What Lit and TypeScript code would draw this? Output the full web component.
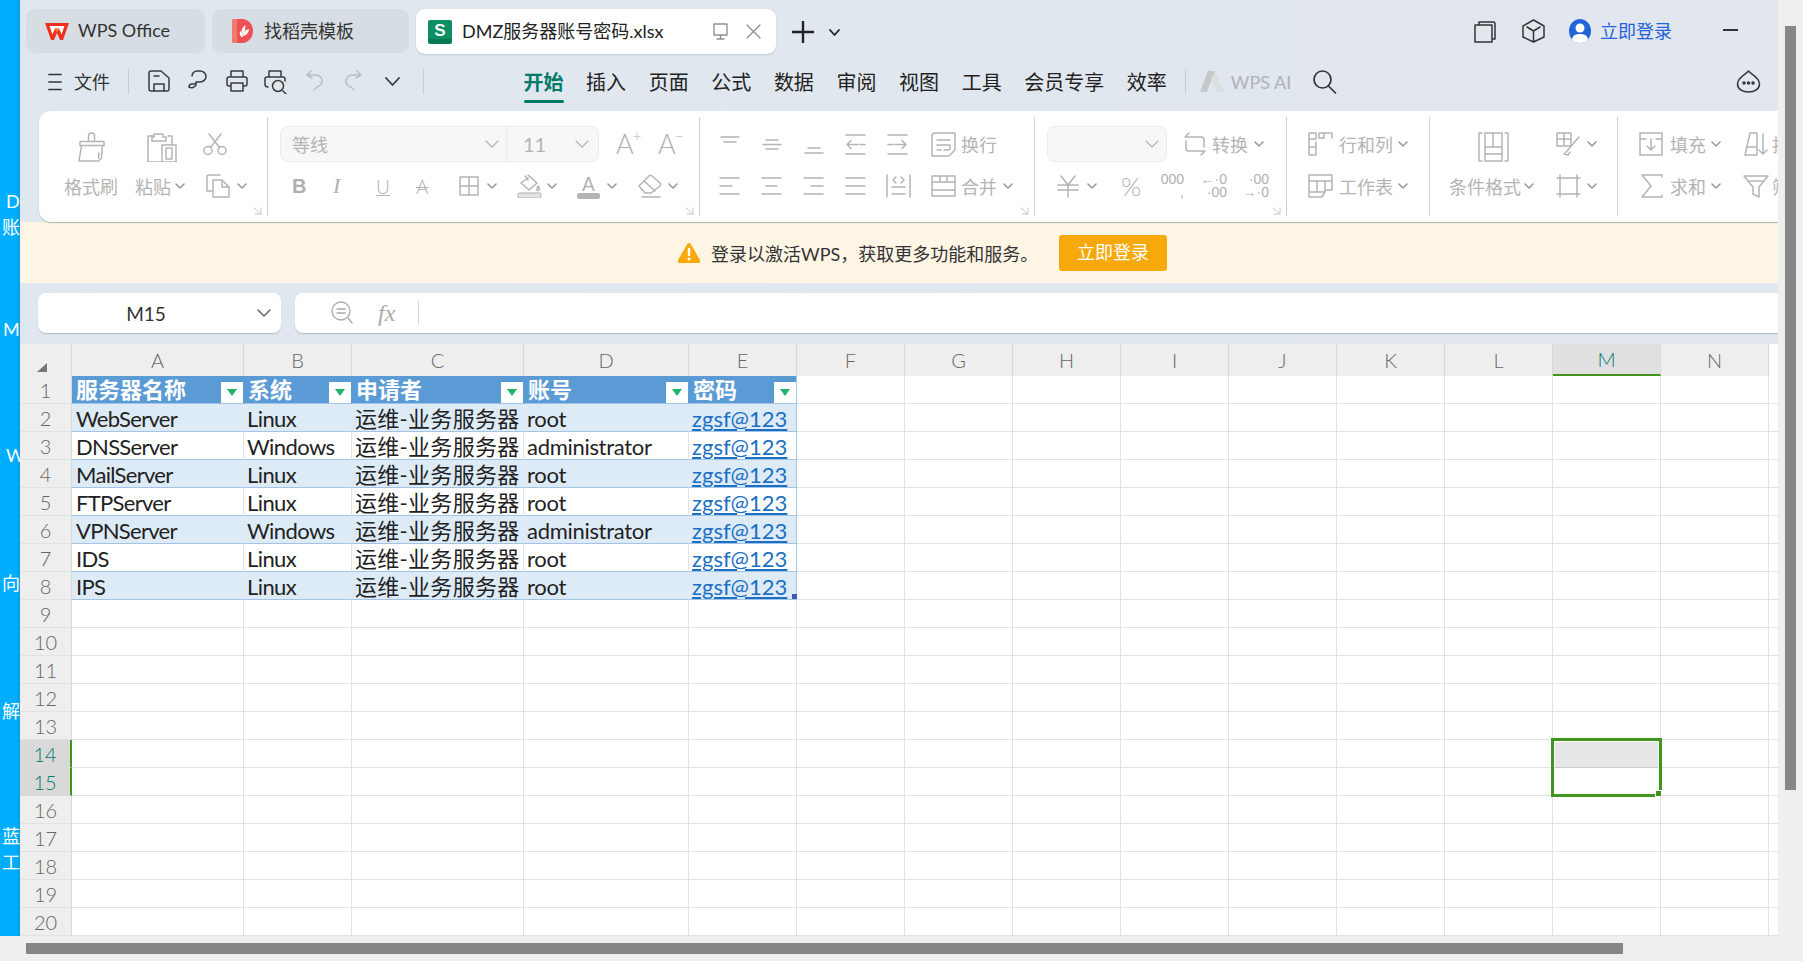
import { LitElement, html, css, svg } from 'lit';
import { customElement } from 'lit/decorators.js';

// icon helper: stroke icons take the colour of their parent
const ic = (w: number, h: number, body: unknown, sw = 1.5) => html`<svg
  width=${w} height=${h} viewBox="0 0 ${w} ${h}" fill="none" stroke="currentColor"
  stroke-width=${sw} stroke-linecap="round" stroke-linejoin="round">${body}</svg>`;

const p = (d: string) => svg`<path d=${d} />`;

const chevron = (w = 12, h = 7, sw = 1.6) => ic(w, h, p(`M1 1L${w / 2} ${h - 1}L${w - 1} 1`), sw);

const brush = ic(30, 30, p('M11.5 9V4a3 3 0 0 1 6 0v5M3 9.5h24v4H3zM4.5 13.5L2 29h19.5l3-3 1-12.5M22 21l-.5 5'));
const clipboard = ic(31, 30, p('M8 4H2v26h18M22 4h4v8M8 5V2h9v3h3v4H6V5zM16 13h14v17H16zM20 16h6v11h-6z'));
const scissors = ic(24, 23, svg`<circle cx="5" cy="17.5" r="4"/><circle cx="19" cy="17.5" r="4"/>${p('M7.5 14.5L18 1M16.5 14.5L6 1')}`);
const copy = ic(24, 24, p('M14 1H3a2 2 0 0 0-2 2v14h5M7 6h9l7 7v10H7zM16 6v7h7'));
const borders = ic(20, 20, p('M1 1h18v18H1zM1 10h18M10 1v18'));
const fillIcon = ic(25, 24, svg`${p('M11 1l9 8-8 7-8-7 7-5M8 2l3 4M21 12c1.5 2 2 3 1 4s-2.5 0-2-1 .5-2 1-3')}<rect x="1" y="19" width="23" height="5" rx="2" fill="#e3e3e3" stroke="#c8c8c8" />`);
const eraser = ic(26, 24, p('M2 12L12 2a2 2 0 0 1 3 0l8 7a2 2 0 0 1 0 3L14 19H8zM7 7l11 10M5 23h18'));
const alTop = ic(20, 24, p('M1 5h18M4 10h12'));
const alMid = ic(20, 24, p('M4 8h12M1 12.5h18M4 17h12'));
const alBot = ic(20, 24, p('M4 16h12M1 21h18'));
const outdent = ic(21, 24, p('M1 3h19M1 22h19M13 12.5H2M6 8.5l-4 4 4 4M15 12.5h5'));
const indent = ic(21, 24, p('M1 3h19M1 22h19M8 12.5h11M15 8.5l4 4-4 4M1 12.5h5'));
const wrap = ic(25, 25, p('M4 1h20v17l-6 6H1V4a3 3 0 0 1 3-3zM6 8h13M6 13h13v3a2 2 0 0 1-2 2h-4M6 18h4'));
const lLeft = ic(21, 24, p('M1 4h19M1 12h12M1 20h19'));
const lCenter = ic(21, 24, p('M1 4h19M5 12h11M1 20h19'));
const lRight = ic(21, 24, p('M1 4h19M8 12h12M1 20h19'));
const lJustify = ic(21, 24, p('M1 4h19M1 12h19M1 20h19'));
const distribute = ic(25, 24, p('M1 1v22M24 1v22M6 20h13M6 13h13M10 3L7 6l3 3M15 3l3 3-3 3'));
const merge = ic(25, 24, p('M1 2h23v20H1zM1 8h23M1 16h23M9 2v6M16 2v6'));
const convert = ic(24, 24, p('M6 1L2 5h16a3 3 0 0 1 3 3v7M3 9v7a3 3 0 0 0 3 3h16M18 23l4-4'));
const yuan = ic(22, 24, p('M4 2l7 9 7-9M1 11h20M1 16h20M11 11v12'));
const rowCol = ic(25, 24, p('M1 1h7v6H1zM11 1h13v5M11 1v5h5M16 1v5M1 7v16h7V10M1 15h7'));
const sheetIcon = ic(25, 24, p('M1 1h23v15M1 1v22h13l3-5M1 7h23M9 7v11M17 7v11M1 18h16M17 16h7'));
const condFormat = ic(31, 30, p('M4 1H1v28h3M27 1h3v28h-3M7 1h17v28H7zM7 15h17M15 1v14M7 22h17'));
const tableBrush = ic(25, 24, p('M1 1h14v13H1zM1 7h14M8 1v13M23 5L11 19M11 19l-3 3 4 1 2-3'));
const borderOuter = ic(25, 24, p('M4 1v22M21 1v22M1 4h23M1 20h23'));
const fillDown = ic(24, 24, p('M1 1h22v22H1zM1 7h6M17 7h6M12 7v11M8 14l4 4 4-4'));
const sumIcon = ic(24, 24, p('M22 3V1H2l9 11-9 11h20v-2'));
const sortIcon = ic(26, 24, p('M2 23L7 1h7v22zM4 15h10M20 2v20M16 18l4 4 4-4'));
const filterIcon = ic(26, 24, p('M1 2h24l-9 11v10l-6-3v-7zM7 7h12'));

type Cell = { x: number; c: unknown; end?: boolean };
const I = (x: number, c: unknown, end = false): Cell => ({ x, c, end });
const T = (x: number, t: string): Cell => ({ x, c: html`<span class="lbl">${t}</span>` });
const C = (x: number): Cell => ({ x, c: html`<span class="caret">${chevron(10, 6)}</span>` });

type Group = { left: number; right: number; launcher?: boolean; rows: Cell[][] };

const fontSelect = html`<div class="fselect">
  <div class="fname"><span>等线</span>${chevron(14, 8, 1.2)}</div>
  <div class="fsize"><span>11</span>${chevron(14, 8, 1.2)}</div>
</div>`;
const numSelect = html`<div class="nselect">${chevron(14, 8, 1.2)}</div>`;
const stack = (a: string, b: string) => html`<div class="stack"><span>${a}</span><span>${b}</span></div>`;

const groups: Group[] = [
  {
    left: 39, right: 268, launcher: true,
    rows: [
      [I(77, brush, true), I(146, clipboard, true), I(203, scissors)],
      [T(64, '格式刷'), T(135, '粘贴'), C(175), I(206, copy), C(237)],
    ],
  },
  {
    left: 268, right: 700, launcher: true,
    rows: [
      [I(280, fontSelect), I(616, html`<span class="big">A<sup>+</sup></span>`), I(658, html`<span class="big">A<sup>−</sup></span>`)],
      [
        I(292, html`<b class="g-b">B</b>`), I(333, html`<i class="g-i">I</i>`), I(376, html`<u class="g-u">U</u>`), I(416, html`<s class="g-u">A</s>`),
        I(459, borders), C(487), I(517, fillIcon), C(547),
        I(577, html`<div class="fcolor"><span>A</span><div></div></div>`), C(607), I(637, eraser), C(668),
      ],
    ],
  },
  {
    left: 700, right: 1035, launcher: true,
    rows: [
      [I(720, alTop), I(762, alMid), I(804, alBot), I(845, outdent), I(887, indent), I(931, wrap), T(961, '换行')],
      [I(719, lLeft), I(761, lCenter), I(803, lRight), I(845, lJustify), I(886, distribute), I(931, merge), T(961, '合并'), C(1003)],
    ],
  },
  {
    left: 1035, right: 1287, launcher: true,
    rows: [
      [I(1047, numSelect), I(1183, convert), T(1212, '转换'), C(1254)],
      [
        I(1057, yuan), C(1087), I(1121, html`<span class="pct">%</span>`),
        I(1162, stack('000', ',')), I(1205, stack('←·0', '·00')), I(1247, stack('·00', '→·0')),
      ],
    ],
  },
  {
    left: 1287, right: 1430,
    rows: [
      [I(1308, rowCol), T(1339, '行和列'), C(1398)],
      [I(1308, sheetIcon), T(1339, '工作表'), C(1398)],
    ],
  },
  {
    left: 1430, right: 1618,
    rows: [
      [I(1478, condFormat, true), I(1556, tableBrush), C(1587)],
      [T(1449, '条件格式'), C(1524), I(1556, borderOuter), C(1587)],
    ],
  },
  {
    left: 1618, right: 1790,
    rows: [
      [I(1639, fillDown), T(1670, '填充'), C(1711), I(1743, sortIcon), T(1772, '排序')],
      [I(1640, sumIcon), T(1670, '求和'), C(1711), I(1743, filterIcon), T(1772, '筛选')],
    ],
  },
];

const sideLabels = [
  { t: 'D', y: 189, x: 6 }, { t: '账', y: 215, x: 2 }, { t: 'M', y: 317, x: 3 }, { t: 'W', y: 443, x: 6 },
  { t: '向', y: 571, x: 2 }, { t: '解', y: 699, x: 2 }, { t: '蓝', y: 824, x: 2 }, { t: '工', y: 850, x: 2 },
];

const menuTabs = ['开始', '插入', '页面', '公式', '数据', '审阅', '视图', '工具', '会员专享', '效率'];
const colNames = ['A', 'B', 'C', 'D', 'E', 'F', 'G', 'H', 'I', 'J', 'K', 'L', 'M', 'N', ''];
const heads = ['服务器名称', '系统', '申请者', '账号', '密码'];
const owner = '运维-业务服务器';
const latinClass = ['ln', 'lw', 'cj', 'lr', ''];
const servers = [
  ['WebServer', 'Linux', 'root'],
  ['DNSServer', 'Windows', 'administrator'],
  ['MailServer', 'Linux', 'root'],
  ['FTPServer', 'Linux', 'root'],
  ['VPNServer', 'Windows', 'administrator'],
  ['IDS', 'Linux', 'root'],
  ['IPS', 'Linux', 'root'],
];

@customElement('app-root')
export class AppRoot extends LitElement {
  static styles = css`
    :host {
      display: block;
      width: 1803px;
      height: 961px;
      overflow: hidden;
      background: #efefef;
      font-family: Lato, 'Noto Sans CJK SC', sans-serif;
      color: #333;
    }
    svg { display: block; flex-shrink: 0; }
    .top { display: flex; height: 936px; }
    .side {
      width: 20px;
      flex-shrink: 0;
      overflow: hidden;
      background: linear-gradient(90deg, #00aeff 0 75%, #0a9fe2 100%);
      color: #fff;
      font-size: 18px;
      line-height: 24px;
      white-space: nowrap;
    }
    .side div { height: 0; overflow: visible; }
    .win { width: 1758px; flex-shrink: 0; display: flex; flex-direction: column; overflow: hidden; background: linear-gradient(90deg, #dfe8ee, #e2e6ee); }
    .vscroll { flex: 1; padding: 26px 7px 0; }
    .vscroll div { height: 764px; background: #868686; }
    .hscroll { height: 25px; padding: 7px 0 0 26px; }
    .hscroll div { width: 1597px; height: 11px; background: #868686; }

    .tabbar { height: 54px; display: flex; align-items: flex-start; padding: 9px 40px 0 6px; box-sizing: border-box; flex-shrink: 0; }
    .tab { height: 44px; display: flex; align-items: center; box-sizing: border-box; border-radius: 9px; background: #d6dee3; font-size: 18px; margin-right: 7px; flex-shrink: 0; }
    .tab span { padding-bottom: 2px; }
    .tab.t1 { width: 179px; padding-left: 19px; gap: 9px; }
    .tab.t2 { width: 197px; padding-left: 20px; gap: 10px; }
    .tab.t3 { width: 360px; height: 45px; padding-left: 12px; gap: 10px; background: #fff; box-shadow: 0 1px 2px #c4ccd2; color: #222; }
    .tab.t3 .name { width: 240px; padding-bottom: 4px; }
    .sicon { width: 24px; height: 24px; border-radius: 2px; background: linear-gradient(#0b8f63 0 78%, #0a7a52 78% 100%); color: #fff; font: bold 17px/22px 'Liberation Sans', sans-serif; text-align: center; }
    .tclose { color: #8a8f94; display: flex; gap: 17px; align-items: center; }
    .plus { margin: 12px 0 0 9px; color: #222; display: flex; align-items: center; gap: 15px; }
    .tright { margin-left: auto; display: flex; align-items: center; height: 44px; color: #333; }
    .tright .login { color: #2264d8; font-size: 18px; margin-left: 9px; width: 72px; white-space: nowrap; padding-bottom: 2px; }
    .tright .min { width: 15px; height: 2px; background: #333; margin: 0 0 3px 51px; }

    .menubar { height: 57px; display: flex; align-items: center; flex-shrink: 0; padding-bottom: 2px; box-sizing: border-box; }
    .ham { margin-left: 28px; color: #333; }
    .filet { font-size: 18px; margin-left: 12px; width: 36px; padding-bottom: 2px; }
    .vline { width: 1px; height: 25px; background: #c6ccd2; flex-shrink: 0; }
    .qa { display: flex; margin-left: 10px; width: 276.5px; }
    .qa div { width: 39px; display: flex; justify-content: center; color: #3a3a3a; }
    .qa .off { color: #b9bdc1; }
    .mtabs { display: flex; gap: 22.6px; margin-left: 100px; font-size: 20px; line-height: 30px; }
    .mtabs div { position: relative; color: #222; white-space: nowrap; }
    .mtabs .on { color: #047a6a; font-weight: 700; }
    .mtabs .on::after { content: ''; position: absolute; left: 0; right: 0; top: 33px; height: 3px; border-radius: 2px; background: #047a6a; }
    .ai { color: #aeb3b7; font-size: 18px; margin: 0 21px 0 7px; width: 61px; white-space: nowrap; }
    .logo-ai { margin-left: 14px; }
    .mright { margin-left: auto; margin-right: 17px; color: #333; }

    .ribbon { height: 111px; margin-left: 19px; display: flex; flex-shrink: 0; overflow: hidden; background: #fff; border-radius: 12px 0 0 12px; box-shadow: 0 1px 1px #aeb4ba; position: relative; color: #b4b4b4; }
    .group { flex-shrink: 0; box-sizing: border-box; margin-top: 6px; height: 99px; padding-top: 9px; border-right: 1px solid #d2d2d2; }
    .group.last { border-right: 0; }
    .row { display: flex; align-items: center; height: 36px; }
    .row + .row { margin-top: 6px; }
    .cell { flex-shrink: 0; display: flex; align-items: center; height: 36px; white-space: nowrap; }
    .cell.end { align-items: flex-end; }
    .lbl { font-size: 18px; color: #b4b4b4; }
    .caret { color: #9a9a9a; display: flex; }
    .launch { display: flex; justify-content: flex-end; padding: 3px 5px 0 0; color: #c4c4c4; }
    .fselect { display: flex; width: 319px; height: 36px; box-sizing: border-box; background: #f7f7f7; border: 1px solid #ececec; border-radius: 7px; color: #b4b4b4; font-size: 18px; }
    .fname { width: 226px; padding: 0 7px 0 11px; box-sizing: border-box; display: flex; align-items: center; justify-content: space-between; border-right: 1px solid #ececec; }
    .fsize { flex: 1; padding: 0 9px 0 16px; display: flex; align-items: center; justify-content: space-between; font-size: 20px; }
    .nselect { width: 120px; height: 36px; box-sizing: border-box; display: flex; align-items: center; justify-content: flex-end; padding-right: 7px; background: #f7f7f7; border: 1px solid #ececec; border-radius: 7px; }
    .big { font-size: 27px; line-height: 24px; font-weight: 300; color: #b0b0b0; }
    .big sup { font-size: 15px; line-height: 0; vertical-align: 12px; margin-left: -1px; }
    .g-b { font: bold 20px 'Liberation Sans', sans-serif; color: #b0b0b0; }
    .g-i { font: italic 22px 'Liberation Serif', serif; color: #b0b0b0; }
    .g-u { font: 300 19px Lato, sans-serif; color: #b0b0b0; }
    .fcolor { width: 23px; text-align: center; font-size: 19px; line-height: 19px; color: #b0b0b0; }
    .fcolor div { height: 6px; border-radius: 2px; background: #b4b4b4; }
    .pct { font-size: 26px; font-weight: 300; color: #b0b0b0; }
    .stack { display: flex; flex-direction: column; font: 14px/13px 'Liberation Sans', sans-serif; color: #b0b0b0; align-items: flex-end; width: 22px; }

    .banner { height: 61px; flex-shrink: 0; display: flex; align-items: center; background: #fef5e5; font-size: 18px; color: #333; }
    .warn { margin-left: 658px; }
    .bantext { margin-left: 11px; width: 348px; white-space: nowrap; }
    .banbtn { width: 108px; height: 36px; line-height: 35px; text-align: center; background: #f7a80b; color: #fff; border-radius: 3px; }

    .fbar { height: 61px; flex-shrink: 0; display: flex; padding: 10px 0 0 18px; box-sizing: border-box; gap: 14px; }
    .namebox, .formula { height: 40px; background: #fff; border-radius: 8px; box-shadow: 0 1px 1px #b4b9be; display: flex; align-items: center; }
    .namebox { width: 243px; font-size: 19px; color: #333; }
    .namebox span { width: 216px; text-align: center; }
    .namebox div { color: #666; margin-left: 3px; }
    .formula { flex: 1; border-radius: 8px 0 0 8px; color: #a8a8a8; padding-left: 36px; }
    .fx { font: italic 24px 'Liberation Serif', serif; margin-left: 25px; width: 40px; color: #aaa; }
    .fdiv { width: 1px; height: 24px; background: #d4d4d4; }

    .sheet { position: relative; height: 592px; overflow: hidden; background: #fff; }
    .grid { display: grid; grid-template-columns: 52px 172px 108px 172px 165px repeat(11, 108px); grid-template-rows: 32px repeat(20, 28px); font-size: 22px; color: #222; }
    .grid > div { box-sizing: border-box; border-right: 1px solid #e3e3e3; border-bottom: 1px solid #e3e3e3; display: flex; align-items: center; white-space: nowrap; line-height: 27px; }
    .grid > .ch { background: #eee; color: #666; font-size: 20px; justify-content: center; border-right-color: #d8d8d8; border-bottom: 0; font-weight: 300; }
    .grid > .ch.corner { padding: 14px 0 0 0; }
    .grid > .ch.act { background: #e0e0e0; color: #007a6e; border-bottom: 2px solid #43931f; }
    .grid > .ch.blank { background: #fff; border-right: 0; }
    .grid > .rh { background: #eee; color: #666; font-size: 20px; justify-content: center; border-right-color: #d8d8d8; border-bottom-color: #e2e2e2; font-weight: 300; padding-top: 2px; }
    .grid > .rh.act { background: #d9d9d9; color: #007a6e; border-right: 2px solid #43931f; border-bottom-color: #d9d9d9; }
    .grid > .hd { background: #5b9bd5; color: #fff; font-weight: 700; padding-left: 4px; border-right-color: #5b9bd5; border-bottom-color: #a3c4e7; }
    .grid > .td { padding: 2px 0 0 3px; border-bottom-color: #a3c4e7; }
    .grid > .td.alt { background: #ddebf7; border-right-color: #ddebf7; }
    .grid > .td.lastc { border-right-color: #a3c4e7; }
    .grid > .hd.lastc { border-right-color: #a3c4e7; }
    .grid > .td a { color: #1b6fc4; text-decoration: underline; }
    .grid > .td.ln { padding-left: 4px; letter-spacing: -0.7px; }
    .grid > .td.lw { letter-spacing: -0.6px; }
    .grid > .td.lr { padding-left: 3px; letter-spacing: -0.3px; }
    .grid > .td.cj { letter-spacing: 0.3px; }
    .flt { margin-left: auto; width: 22px; height: 21px; align-self: flex-end; background: #fff; display: flex; align-items: center; justify-content: center; }
    .flt i { width: 0; height: 0; border-left: 5px solid transparent; border-right: 5px solid transparent; border-top: 7px solid #1fb36b; }
    .corner-tri { width: 0; height: 0; border-left: 10px solid transparent; border-bottom: 9px solid #777; margin-left: -8px; }
    .handle { position: absolute; left: 772px; top: 250px; width: 5px; height: 5px; background: #3f5ab0; }
    .sel { position: absolute; left: 1531px; top: 394px; width: 111px; height: 59px; box-sizing: border-box; border: 3px solid #43931f; }
    .sel div { margin: 1px 1px 0; height: 25px; background: #e6e6e6; border-bottom: 1px solid #ccc; }
    .sel i { position: absolute; right: -3px; bottom: -3px; width: 5px; height: 5px; background: #43931f; border: 1px solid #fff; }
  `;

  renderGroup(g: Group, last: boolean) {
    return html`<div class="group ${last ? 'last' : ''}" style="width:${g.right - g.left}px">
      ${g.rows.map(cells => html`<div class="row" style="padding-left:${cells[0].x - g.left}px">
        ${cells.map((c, i) => {
          const nxt = i + 1 < cells.length ? cells[i + 1].x : c.x + 60;
          return html`<div class="cell ${c.end ? 'end' : ''}" style="width:${nxt - c.x}px">${c.c}</div>`;
        })}
      </div>`)}
      ${g.launcher ? html`<div class="launch">${ic(9, 8, p('M1 1l7 6M8 1v6H2'), 1)}</div>` : ''}
    </div>`;
  }

  renderTabs() {
    return html`<div class="tabbar">
      <div class="tab t1">
        <svg width="24" height="17" viewBox="0 0 24 17"><path d="M0 0h24l-6 17h-3l-3-7-3 7H6z" fill="#f0301f"/><path d="M4.5 3h15l-3 8.500-2.500-6h-4l-2.500 6z" fill="#fff"/><path d="M10 6h4l-2 4z" fill="#ff7a1a"/></svg>
        <span>WPS Office</span>
      </div>
      <div class="tab t2">
        <svg width="22" height="24" viewBox="0 0 22 24"><path d="M0 2a2 2 0 0 1 2-2h8a11 12 0 0 1 0 24H2a2 2 0 0 1-2-2z" fill="#ee5053"/><path d="M0 2a2 2 0 0 1 2-2h3v24H2a2 2 0 0 1-2-2z" fill="#f47a70"/><path d="M13 6c1 3 0 6-2 9-2-2-2-5 2-9zM17 10c0 3-2 6-6 7 0-3 2-6 6-7zM8 12c2 1 3 3 3 6-2 0-4-2-3-6z" fill="#fff"/></svg>
        <span>找稻壳模板</span>
      </div>
      <div class="tab t3">
        <div class="sicon">S</div>
        <span class="name">DMZ服务器账号密码.xlsx</span>
        <div class="tclose">
          ${ic(17, 17, p('M2 1h13v11H2zM8.5 12v4M5 16h7'), 1.3)}
          ${ic(15, 15, p('M1 1l13 13M14 1L1 14'), 1.3)}
        </div>
      </div>
      <div class="plus">
        ${ic(22, 22, p('M11 0v22M0 11h22'), 2.4)}
        ${chevron(11, 7, 1.8)}
      </div>
      <div class="tright">
        ${ic(23, 23, p('M6 5V2h14a2 2 0 0 1 2 2v15h-3M2 5h17v17H2z'))}
        <span style="width:26px"></span>
        ${ic(23, 24, p('M11.5 1L22 7v11l-10.500 5L1 18V7zM5 8l6.500 4 6.500-4M11.500 12v10'))}
        <span style="width:24px"></span>
        <svg width="22" height="24" viewBox="0 0 22 24"><ellipse cx="11" cy="12" rx="11" ry="12" fill="#2264d8"/><circle cx="11" cy="9" r="4.5" fill="#fff"/><path d="M3 20c1-4 4-5 8-5s7 1 8 5c-2 3-5 4-8 4s-6-1-8-4z" fill="#fff"/></svg>
        <span class="login">立即登录</span>
        <div class="min"></div>
      </div>
    </div>`;
  }

  renderMenu() {
    return html`<div class="menubar">
      <div class="ham">${ic(14, 18, p('M1 1.5h12M1 9h12M1 16.5h12'), 1.7)}</div>
      <span class="filet">文件</span>
      <div class="vline" style="margin-left:18px"></div>
      <div class="qa">
        <div>${ic(22, 22, p('M3 1h10l8 7v11a2 2 0 0 1-2 2H3a2 2 0 0 1-2-2V3a2 2 0 0 1 2-2zM6 21v-7h10v7M6 6h5'))}</div>
        <div>${ic(20, 22, p('M8 12h4a6 5.5 0 0 0 0-11H9a5 5 0 0 0-5 5M8 12v3a5 5 0 0 1-7 2 3 3 0 0 1 3-3h4'))}</div>
        <div>${ic(22, 22, p('M5 7V1h12v6M5 16H3a2 2 0 0 1-2-2V9a2 2 0 0 1 2-2h16a2 2 0 0 1 2 2v5a2 2 0 0 1-2 2h-2M5 13h12v8H5z'))}</div>
        <div>${ic(23, 24, svg`${p('M5 7V1h12v6M4 17a3 3 0 0 1-3-3V9a2 2 0 0 1 2-2h16a2 2 0 0 1 2 2v2M19 21l3 3')}<circle cx="14" cy="16" r="5.5"/>`)}</div>
        <div class="off">${ic(17, 21, p('M5 1L1 5l5 3M1 5h8a6 6 0 0 1 2 12l-3 3'))}</div>
        <div class="off">${ic(17, 21, p('M12 1l4 4-5 3M16 5H8a6 6 0 0 0-2 12l3 3'))}</div>
        <div style="align-items:center">${chevron(15, 9, 1.8)}</div>
      </div>
      <div class="vline" style="margin-left:7px"></div>
      <div class="mtabs">
        ${menuTabs.map((t, i) => html`<div class=${i === 0 ? 'on' : ''}>${t}</div>`)}
      </div>
      <div class="vline" style="margin-left:18px"></div>
      <svg class="logo-ai" width="24" height="21" viewBox="0 0 24 21"><path d="M8 0h7L7 21H0z" fill="#c4c8cb"/><path d="M15 0l9 21h-8L11 9z" fill="#dcdfe2"/></svg>
      <span class="ai">WPS AI</span>
      <div style="color:#333">${ic(24, 24, svg`<circle cx="9.5" cy="9.5" r="8.5"/>${p('M15.5 16l7 7')}`, 1.7)}</div>
      <div class="mright">${ic(25, 25, svg`${p('M12.5 2c-2 3-11 6-11 13 0 5 5 8 11 8s11-3 11-8c0-7-9-10-11-13z')}<circle cx="8" cy="14" r="1" fill="currentColor"/><circle cx="12.5" cy="14" r="1" fill="currentColor"/><circle cx="17" cy="14" r="1" fill="currentColor"/>`)}</div>
    </div>`;
  }

  renderGrid() {
    const rows = [];
    for (let r = 1; r <= 20; r++) {
      const act = r === 14 || r === 15;
      rows.push(html`<div class="rh ${act ? 'act' : ''}">${r}</div>`);
      for (let c = 0; c < 15; c++) {
        if (r === 1 && c < 5) {
          rows.push(html`<div class="hd ${c === 4 ? 'lastc' : ''}"><span>${heads[c]}</span><div class="flt"><i></i></div></div>`);
        } else if (r >= 2 && r <= 8 && c < 5) {
          const s = servers[r - 2];
          const alt = r % 2 === 0 ? 'alt' : '';
          const last = c === 4 ? 'lastc' : '';
          const content = c === 0 ? s[0] : c === 1 ? s[1] : c === 2 ? owner : c === 3 ? s[2] : html`<a>zgsf@123</a>`;
          rows.push(html`<div class="td ${alt} ${last} ${latinClass[c]}">${content}</div>`);
        } else {
          rows.push(html`<div></div>`);
        }
      }
    }
    return html`<div class="grid">
      <div class="ch corner"><div class="corner-tri"></div></div>
      ${colNames.map(n => html`<div class="ch ${n === 'M' ? 'act' : ''} ${n === '' ? 'blank' : ''}">${n}</div>`)}
      ${rows}
    </div>`;
  }

  render() {
    return html`
      <div class="top">
        <div class="side">
          ${sideLabels.map((l, i) => html`<div style="padding-left:${l.x}px;margin-top:${i === 0 ? l.y : l.y - sideLabels[i - 1].y}px">${l.t}</div>`)}
        </div>
        <div class="win">
          ${this.renderTabs()}
          ${this.renderMenu()}
          <div class="ribbon">${groups.map((g, i) => this.renderGroup(g, i === groups.length - 1))}</div>
          <div class="banner">
            <svg class="warn" width="22" height="20" viewBox="0 0 22 20"><path d="M11 0a2 2 0 0 1 1.700 1l9 15.500a2 2 0 0 1-1.700 3.500H2a2 2 0 0 1-1.700-3.500L9.300 1A2 2 0 0 1 11 0z" fill="#fba90a"/><path d="M11 6v6" stroke="#fff" stroke-width="2.400" stroke-linecap="round"/><circle cx="11" cy="16" r="1.500" fill="#fff"/></svg>
            <span class="bantext">登录以激活WPS，获取更多功能和服务。</span>
            <div class="banbtn">立即登录</div>
          </div>
          <div class="fbar">
            <div class="namebox"><span>M15</span><div>${chevron(14, 8, 1.5)}</div></div>
            <div class="formula">
              ${ic(22, 24, svg`<circle cx="10" cy="10" r="9"/>${p('M6 8h8M6 12h8M17 17l4 5')}`, 1.3)}
              <span class="fx">fx</span>
              <div class="fdiv"></div>
            </div>
          </div>
          <div class="sheet">
            ${this.renderGrid()}
            <div class="handle"></div>
            <div class="sel"><div></div><i></i></div>
          </div>
        </div>
        <div class="vscroll"><div></div></div>
      </div>
      <div class="hscroll"><div></div></div>
    `;
  }
}
